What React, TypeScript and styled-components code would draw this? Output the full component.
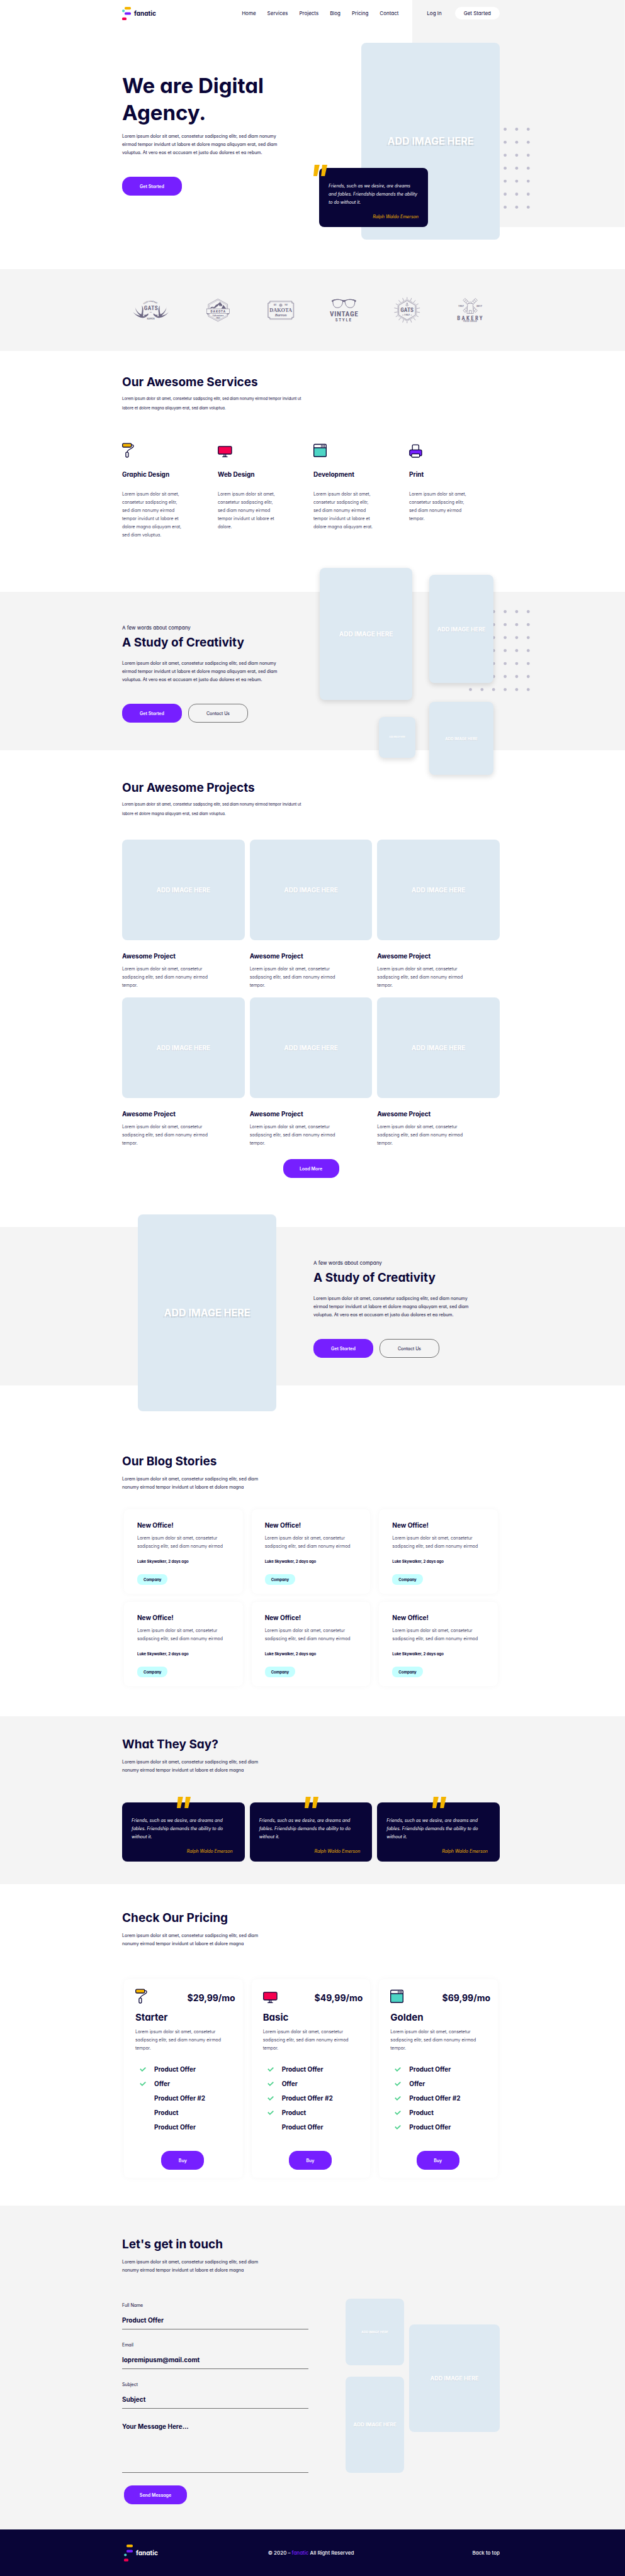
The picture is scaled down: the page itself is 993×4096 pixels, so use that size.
import React from "react";
import styled, { createGlobalStyle, css } from "styled-components";

const navy = "#090537";
const purple = "#761fff";
const amber = "#f4b400";
const teal = "#4dd5c5";
const red = "#f60050";
const grey = "#f4f4f4";
const logoInk = "#6d6883";

const GlobalStyle = createGlobalStyle`
  *, *::before, *::after { box-sizing: border-box; }
  body {
    margin: 0;
    background: #fff;
    color: ${navy};
    font-family: Inter, "Liberation Sans", sans-serif;
    font-feature-settings: "cv11";
    font-size: 7px;
    line-height: 13px;
  }
  h1, h2, h3, p, ul, figure, blockquote { margin: 0; padding: 0; }
  a { color: inherit; text-decoration: none; }
  button, input, textarea { font: inherit; font-feature-settings: inherit; color: inherit; }
`;

/* ---------- shared parts ---------- */

const Container = styled.div`
  width: 100%;
  max-width: 605px;
  margin: 0 auto;
  padding-right: 5px;
`;

const Section = styled.section<{ $top: number; $bottom: number; $grey?: boolean }>`
  padding: ${(p) => p.$top}px 0 ${(p) => p.$bottom}px;
  background: ${(p) => (p.$grey ? grey : "transparent")};
`;

const Title = styled.h2`
  font-size: 19px;
  line-height: 24px;
  font-weight: 700;
`;

const Lead = styled.p<{ $loose?: boolean }>`
  margin-top: ${(p) => (p.$loose ? 6 : 9)}px;
  font-size: ${(p) => (p.$loose ? 6 : 7)}px;
  line-height: ${(p) => (p.$loose ? 15 : 13)}px;
`;

const Copy = styled.p`
  font-size: 7px;
  line-height: 13px;
  font-weight: 300;
`;

const CardTitle = styled.h3`
  font-size: 10px;
  line-height: 12px;
  font-weight: 700;
`;

const Button = styled.button<{ $w: number; $outline?: boolean }>`
  height: 30px;
  min-width: ${(p) => p.$w}px;
  padding: 0 16px;
  border: 1px solid ${(p) => (p.$outline ? "#707070" : purple)};
  border-radius: 13px;
  background: ${(p) => (p.$outline ? "transparent" : purple)};
  color: ${(p) => (p.$outline ? navy : "#fff")};
  font-size: 7px;
  font-weight: ${(p) => (p.$outline ? 400 : 600)};
  white-space: nowrap;
`;

const ButtonRow = styled.div`
  display: flex;
  gap: 10px;
  margin-top: 32px;
`;

const ThreeColumns = styled.div<{ $top: number }>`
  display: grid;
  grid-template-columns: repeat(3, minmax(0, 1fr));
  gap: 13px 8px;
  margin-top: ${(p) => p.$top}px;
`;

const Placeholder = styled.div<{ $w?: number; $h: number; $text: number; $raised?: boolean }>`
  position: relative;
  display: flex;
  align-items: center;
  justify-content: center;
  width: ${(p) => (p.$w ? `${p.$w}px` : "100%")};
  height: ${(p) => p.$h}px;
  border-radius: 8px;
  background: #dde9f2;
  color: #fff;
  font-size: ${(p) => p.$text}px;
  font-weight: 700;
  white-space: nowrap;
  text-shadow: ${(p) =>
    p.$text > 12
      ? "-2px 2px 0 rgba(0,0,0,.07), 2px 2px 0 rgba(0,0,0,.07)"
      : "-1px 1px 0 rgba(0,0,0,.05), 1px 1px 0 rgba(0,0,0,.05)"};
  ${(p) => p.$raised && css`box-shadow: 0 3px 8px rgba(0, 0, 0, 0.14);`}
`;

const ImageBox = (props: { w?: number; h: number; text: number; raised?: boolean }) => (
  <Placeholder $w={props.w} $h={props.h} $text={props.text} $raised={props.raised}>
    ADD IMAGE HERE
  </Placeholder>
);

const DotsSvg = styled.svg<{ $x: number; $y: number }>`
  position: absolute;
  left: ${(p) => p.$x}px;
  top: ${(p) => p.$y}px;
  fill: #bfbdce;
`;

const Dots = ({ x, y }: { x: number; y: number }) => (
  <DotsSvg $x={x} $y={y} width="97" height="129" viewBox="0 0 97 129" aria-hidden="true">
    {Array.from({ length: 42 }, (_, i) => (
      <circle key={i} cx={2.5 + (i % 6) * 18.35} cy={2.5 + Math.floor(i / 6) * 20.65} r="2.4" />
    ))}
  </DotsSvg>
);

const LogoLink = styled.a`
  display: flex;
  align-items: center;
  gap: 5px;
  font-size: 10px;
  line-height: 12px;
  font-weight: 700;
`;

const Logo = ({ footer }: { footer?: boolean }) => (
  <LogoLink href="#top">
    <svg width="14" height={footer ? 27 : 21} viewBox={footer ? "0 0 14 27" : "0 0 14 21"} aria-hidden="true">
      <rect x="4" y="0" width="10" height="4.2" rx="1.6" fill={amber} />
      <rect x="4" y="8.4" width="10" height="4.2" rx="1.6" fill={purple} />
      {footer ? (
        <>
          <circle cx="2.2" cy="16.5" r="2.1" fill={teal} />
          <rect x="0" y="22.6" width="7" height="4.2" rx="1.6" fill={red} />
        </>
      ) : (
        <>
          <circle cx="2.1" cy="6.3" r="2.1" fill={teal} />
          <rect x="0" y="16.7" width="7" height="4.3" rx="1.6" fill={red} />
        </>
      )}
    </svg>
    <span>fanatic</span>
  </LogoLink>
);

/* ---------- service icons ---------- */

const IconSvg = styled.svg`
  display: block;
  overflow: visible;
  stroke: ${navy};
  stroke-width: 1.3;
  fill: none;
`;

const RollerIcon = () => (
  <IconSvg width="24" height="30" viewBox="0 0 24 30" aria-hidden="true">
    <rect x="0.7" y="7.2" width="14" height="5.8" rx="1.5" fill={amber} />
    <path d="M14.8 9.4h1.4c1.6 0 2.4 1.6 1.4 3.2-1.6 2.6-7.6 3.8-9 6.6-.4.8-.5 1.4-.5 2" />
    <rect x="5.9" y="20.8" width="4" height="8.3" rx="2" />
  </IconSvg>
);

const MonitorIcon = () => (
  <IconSvg width="24" height="30" viewBox="0 0 24 30" aria-hidden="true">
    <rect x="0.7" y="11.8" width="21.3" height="12.2" rx="1.5" fill={red} />
    <path d="M10 24.5v3.5M12.600 24.500v3.500M7.200 28.300h8.300" />
  </IconSvg>
);

const WindowIcon = () => (
  <IconSvg width="24" height="30" viewBox="0 0 24 30" aria-hidden="true">
    <rect x="0.7" y="8.500" width="19.600" height="19.400" rx="1.500" fill="#fff" />
    <path d="M0.700 14h19.600v12.400a1.500 1.500 0 0 1-1.500 1.500H2.200a1.500 1.500 0 0 1-1.500-1.500z" fill={teal} />
    <circle cx="13.400" cy="11.300" r="1.200" strokeWidth="0.900" />
    <circle cx="17.100" cy="11.300" r="1.200" strokeWidth="0.900" />
  </IconSvg>
);

const PrinterIcon = () => (
  <IconSvg width="24" height="30" viewBox="0 0 24 30" aria-hidden="true">
    <path d="M5.200 17.400V10.800a1.500 1.500 0 0 1 1.500-1.500h7.200a1.500 1.500 0 0 1 1.500 1.500v6.600" />
    <path d="M3.600 26.700h-.8a2 2 0 0 1-2-2v-5.300a2 2 0 0 1 2-2h15.200a2 2 0 0 1 2 2v5.300a2 2 0 0 1-2 2h-.8z" fill={purple} />
    <rect x="3.900" y="23.600" width="12.800" height="5.400" rx="1.500" fill="#fff" />
  </IconSvg>
);

/* ---------- header and hero ---------- */

const Top = styled.div`
  padding-bottom: 47px;
  background: linear-gradient(${grey}, ${grey}) right top / 34% 361px no-repeat;
`;

const Header = styled.header`
  display: flex;
  align-items: center;
  height: 42px;
`;

const Nav = styled.nav`
  display: flex;
  gap: 18px;
  margin-left: auto;
  font-size: 8px;
`;

const Account = styled.div`
  display: flex;
  align-items: center;
  gap: 21px;
  margin-left: 45px;
  font-size: 8px;
`;

const HeaderButton = styled.button`
  height: 20px;
  padding: 0 14px;
  border: 0;
  border-radius: 10px;
  background: #fff;
  font-size: 8px;
  white-space: nowrap;
`;

const Hero = styled.div`
  display: flex;
  justify-content: space-between;
  padding-top: 26px;
`;

const HeroText = styled.div`
  width: 270px;
  padding-top: 47px;
`;

const HeroTitle = styled.h1`
  font-size: 33px;
  line-height: 43px;
  font-weight: 700;
`;

const Paragraph = styled.p<{ $top: number }>`
  margin-top: ${(p) => p.$top}px;
  white-space: nowrap;
`;

const HeroImage = styled.div`
  position: relative;
`;

const QuoteCard = styled.blockquote`
  position: relative;
  height: 94px;
  padding: 22px 15px 10px;
  border-radius: 8px;
  background: ${navy};
  color: #fff;
  font-size: 7px;
  font-style: italic;
  white-space: nowrap;
`;

const FloatingQuote = styled.div`
  position: absolute;
  left: -67px;
  top: 199px;
  width: 173px;
`;

const Author = styled.footer<{ $inset: number }>`
  margin-top: 10px;
  padding-right: ${(p) => p.$inset}px;
  color: ${amber};
  text-align: right;
`;

const Mark = styled.svg<{ $corner?: boolean }>`
  position: absolute;
  top: ${(p) => (p.$corner ? -5 : -9)}px;
  left: ${(p) => (p.$corner ? "-9px" : "calc(50% - 10px)")};
  fill: ${amber};
`;

const Quote = ({ corner }: { corner?: boolean }) => (
  <QuoteCard>
    <Mark $corner={corner} width="22" height="18" viewBox="0 0 22 18" aria-hidden="true">
      <path d="M1.800 0H9.800L5.900 18H0zM14 0H22L18.100 18H12.200z" />
    </Mark>
    <p>
      {corner ? (
        <>Friends, such as we desire, are dreams<br />and fables. Friendship demands the ability<br />to do without it.</>
      ) : (
        <>Friends, such as we desire, are dreams and<br />fables. Friendship demands the ability to do<br />without it.</>
      )}
    </p>
    <Author $inset={corner ? 0 : 4}>Ralph Waldo Emerson</Author>
  </QuoteCard>
);

/* ---------- client logos ---------- */

const Clients = styled.div`
  display: grid;
  grid-template-columns: repeat(6, minmax(0, 1fr));
`;

const ClientSvg = styled.svg`
  display: block;
  width: 100%;
  height: 50px;
  fill: none;
  stroke: ${logoInk};
  stroke-width: 5;
  text {
    fill: ${logoInk};
    stroke: none;
    text-anchor: middle;
    font-family: "Roboto Condensed", Roboto, sans-serif;
    font-weight: 700;
  }
  .serif { font-family: "Liberation Serif", serif; }
  .script { font-family: "Liberation Serif", serif; font-style: italic; }
  .wide { font-family: Roboto, sans-serif; font-weight: 500; }
  .thin { stroke-width: 3; }
  .ink { fill: ${logoInk}; stroke: none; }
`;

const Antler = () => (
  <path className="ink" d="M57 211C80 238 108 258 140 262C165 264 180 252 196 236V221C182 234 168 238 152 234C156 239 160 243 166 243C160 248 152 249 146 247C148 243 149 239 149 235C147 226 148 216 150 205C152 184 148 164 137 149C142 172 140 205 132 230C104 218 84 194 75 163C80 194 96 222 122 243C98 240 76 228 57 211Z" />
);

const GatsAntlers = () => (
  <ClientSvg viewBox="-45 57 580 290" role="img" aria-label="Gats Barron">
    <defs><path id="gats-arc" d="M146 146Q218 84 292 146" /></defs>
    <text className="wide" fontSize="17"><textPath href="#gats-arc" startOffset="8%" textAnchor="start">FOOD COMPANY</textPath></text>
    <Antler />
    <g transform="matrix(-1 0 0 1 440 0)"><Antler /></g>
    <text x="222" y="190" fontSize="54" letterSpacing="3">GATS</text>
    <text x="218" y="211" fontSize="11">1957</text>
    <text className="wide" x="220" y="276" fontSize="18">BARRON</text>
  </ClientSvg>
);

const DakotaAdventure = () => (
  <ClientSvg viewBox="535 57 580 290" role="img" aria-label="Dakota Adventure">
    <path d="M838 88L927 137V248L838 295L749 248V137Z" className="thin" />
    <path d="M838 99L917 143V242L838 284L759 242V143Z" strokeWidth="2" />
    <path className="ink" d="M762 177L776 163L790 160L802 164L820 142L836 136L858 117L880 146L862 162L866 148L852 156L848 140L834 156L822 163L815 177L818 166L800 177L795 168ZM870 177L888 142L914 177Z" />
    <rect x="734" y="179" width="209" height="42" fill={grey} className="thin" />
    <path className="ink" d="M732 222H750V236ZM945 222H927V236Z" />
    <text x="841" y="211" fontSize="32" letterSpacing="6">DAKOTA</text>
    <text className="script" x="838" y="246" fontSize="25">Adventure</text>
    <text x="838" y="270" fontSize="19">1957</text>
  </ClientSvg>
);

const DakotaBarron = () => (
  <ClientSvg viewBox="1115 57 580 290" role="img" aria-label="Dakota Barron">
    <path className="thin" d="M1317 108H1519V127H1537V257H1519V276H1317V257H1298V127H1317Z" />
    <path strokeWidth="2" d="M1312 115H1524V122H1532V262H1524V268H1312V262H1304V122H1312Z" />
    <circle cx="1417" cy="146" r="11" className="thin" />
    <path strokeWidth="2" d="M1417 128V164M1399 146H1435M1405 134L1429 158M1429 134L1405 158" />
    <text x="1366" y="152" fontSize="15">EST.</text>
    <text x="1466" y="152" fontSize="15">1957</text>
    <text className="serif" x="1417" y="206" fontSize="48">DAKOTA</text>
    <text className="script" x="1417" y="248" fontSize="36">Barron</text>
  </ClientSvg>
);

const VintageStyle = () => (
  <ClientSvg viewBox="-133 57 580 290" role="img" aria-label="Vintage Style">
    <path d="M69 104C68 150 84 169 112 169C143 168 158 145 161 108C140 88 90 89 69 104Z" />
    <path d="M272 104C273 150 257 169 229 169C198 168 183 145 180 108C201 88 251 89 272 104Z" />
    <path className="ink" d="M57 104C76 90 105 88 130 92C155 101 186 101 211 92C236 88 265 90 285 104L280 114L270 118L268 106C240 94 205 92 184 106L180 119C174 112 167 112 161 119L157 106C136 92 101 94 73 106L71 118L61 114Z" />
    <text x="173" y="251" fontSize="66" letterSpacing="4">VINTAGE</text>
    <text x="170" y="293" fontSize="41" letterSpacing="10">STYLE</text>
  </ClientSvg>
);

const GatsBurst = () => (
  <ClientSvg viewBox="447 57 580 290" role="img" aria-label="Gats 1957">
    <path d="M753 104L829 147V236L753 280L677 236V147Z" className="thin" />
    <g className="thin">
      {Array.from({ length: 54 }, (_, i) => {
        const a = (i * Math.PI * 2) / 54 - Math.PI / 2;
        const off = (((i + 4.5) % 9) - 4.5) * (Math.PI / 27);
        const r0 = 78 / Math.cos(Math.PI / 6 - Math.abs(off)) + 1;
        const r1 = i % 3 === 0 ? 120 : r0 + 12;
        return (
          <line
            key={i}
            x1={753 + Math.cos(a) * r0}
            y1={192 + Math.sin(a) * r0}
            x2={753 + Math.cos(a) * r1}
            y2={192 + Math.sin(a) * r1}
          />
        );
      })}
      <circle cx="753" cy="128" r="4" />
      <path d="M753 132V152M746 136H760M740 142C742 150 748 152 753 153C758 152 764 150 766 142" />
    </g>
    <text x="753" y="210" fontSize="54" letterSpacing="1">GATS</text>
    <text x="753" y="245" fontSize="23" letterSpacing="2">1957</text>
    <path className="thin" d="M708 237H720M786 237H798" />
  </ClientSvg>
);

const Blade = () => (
  <path className="thin" d="M1309 139L1270 100L1287 83L1322 117M1296 126L1310 105M1283 113L1298 94" />
);

const Bakery = () => (
  <ClientSvg viewBox="1027 57 580 290" role="img" aria-label="Bakery Fresh Bread">
    <Blade />
    <g transform="matrix(-1 0 0 1 2670 0)"><Blade /></g>
    <g transform="matrix(1 0 0 -1 0 295)"><Blade /></g>
    <g transform="matrix(-1 0 0 -1 2670 295)"><Blade /></g>
    <path className="thin" fill={grey} d="M1311 130H1359L1365 222H1305ZM1320 130C1326 112 1344 112 1350 130M1325 222V194H1346V222" />
    <text x="1250" y="161" fontSize="24" letterSpacing="1">1957</text>
    <text x="1418" y="161" fontSize="24" letterSpacing="1">2017</text>
    <text x="1338" y="281" fontSize="50" letterSpacing="14">BAKERY</text>
    <text x="1335" y="303" fontSize="15" letterSpacing="4">FRESH BREAD</text>
  </ClientSvg>
);

/* ---------- services ---------- */

const ServiceGrid = styled.div`
  display: grid;
  grid-template-columns: repeat(4, 152px);
  margin-top: 42px;
  ${CardTitle} { margin-top: 20px; }
  ${Copy} { margin-top: 19px; }
`;

const services = [
  { name: "Graphic Design", icon: <RollerIcon />, lines: ["Lorem ipsum dolor sit amet,", "consetetur sadipscing elitr,", "sed diam nonumy eirmod", "tempor invidunt ut labore et", "dolore magna aliquyam erat,", "sed diam voluptua."] },
  { name: "Web Design", icon: <MonitorIcon />, lines: ["Lorem ipsum dolor sit amet,", "consetetur sadipscing elitr,", "sed diam nonumy eirmod", "tempor invidunt ut labore et", "dolore."] },
  { name: "Development", icon: <WindowIcon />, lines: ["Lorem ipsum dolor sit amet,", "consetetur sadipscing elitr,", "sed diam nonumy eirmod", "tempor invidunt ut labore et", "dolore magna aliquyam erat."] },
  { name: "Print", icon: <PrinterIcon />, lines: ["Lorem ipsum dolor sit amet,", "consetetur sadipscing elitr,", "sed diam nonumy eirmod", "tempor."] },
];

const Lines = ({ of }: { of: string[] }) => (
  <>
    {of.map((line, i) => (
      <React.Fragment key={i}>
        {i > 0 && <br />}
        {line}
      </React.Fragment>
    ))}
  </>
);

/* ---------- study of creativity ---------- */

const StudyRow = styled(Container)`
  display: flex;
  height: 252px;
`;

const StudyText = styled.div`
  flex: none;
  width: 314px;
  padding-top: 51px;
`;

const Kicker = styled.p`
  font-size: 8px;
  line-height: 12px;
  margin-bottom: 6px;
`;

const Collage = styled.div`
  position: relative;
  display: flex;
  gap: 22px;
  align-self: flex-start;
  margin-top: -38px;
`;

const CollageColumn = styled.div<{ $top: number; $gap: number }>`
  position: relative;
  display: flex;
  flex-direction: column;
  align-items: flex-end;
  gap: ${(p) => p.$gap}px;
  padding-top: ${(p) => p.$top}px;
`;

const Shift = styled.div`
  padding-right: 5px;
`;

const SideImage = styled.div`
  flex: none;
  width: 304px;
  padding-left: 25px;
  margin-top: -20px;
`;

const Study = () => (
  <StudyText>
    <Kicker>A few words about company</Kicker>
    <Title>A Study of Creativity</Title>
    <Paragraph $top={14}>
      Lorem ipsum dolor sit amet, consetetur sadipscing elitr, sed diam nonumy<br />
      eirmod tempor invidunt ut labore et dolore magna aliquyam erat, sed diam<br />
      voluptua. At vero eos et accusam et justo duo dolores et ea rebum.
    </Paragraph>
    <ButtonRow>
      <Button type="button" $w={95}>Get Started</Button>
      <Button type="button" $w={95} $outline>Contact Us</Button>
    </ButtonRow>
  </StudyText>
);

/* ---------- projects, blog, pricing ---------- */

const Project = styled.article`
  ${CardTitle} { margin: 19px 0 8px; }
`;

const Centered = styled.div<{ $top: number }>`
  display: flex;
  justify-content: center;
  margin-top: ${(p) => p.$top}px;
`;

const Card = styled.article`
  margin: 0 3px;
  border-radius: 8px;
  background: #fff;
  box-shadow: 0 0 10px rgba(0, 0, 0, 0.04);
`;

const Story = styled(Card)`
  height: 134px;
  padding: 19px 21px 14px;
  ${Copy} { margin-top: 8px; white-space: nowrap; }
`;

const Byline = styled.p`
  margin: 12px 0 14px;
  font-size: 6px;
  line-height: 12px;
  font-weight: 700;
`;

const Tag = styled.a`
  display: flex;
  align-items: center;
  width: fit-content;
  height: 17px;
  padding: 0 10px;
  border-radius: 7px 7px 9px 7px;
  background: #c4ffff;
  font-size: 6px;
  font-weight: 700;
`;

const Plan = styled(Card)`
  height: 316px;
  padding: 12px 12px 13px 18px;
`;

const PlanHead = styled.div`
  display: flex;
  align-items: center;
  justify-content: space-between;
  height: 30px;
`;

const PlanIcon = styled.div`
  margin-top: -6px;
`;

const Price = styled.p`
  padding-top: 5px;
  font-size: 14px;
  line-height: 18px;
  font-weight: 700;
`;

const PlanName = styled.h3`
  margin: 10px 0 7px;
  font-size: 15px;
  line-height: 18px;
  font-weight: 700;
`;

const Features = styled.ul`
  margin-top: 16px;
  list-style: none;
`;

const Feature = styled.li`
  display: grid;
  grid-template-columns: 30px 1fr;
  align-items: center;
  height: 23px;
  font-size: 10px;
  font-weight: 700;
  svg { margin-left: 7px; grid-column: 1; }
  span { grid-column: 2; }
`;

const BuyRow = styled(Centered)`
  padding-right: 8px;
`;

const Check = () => (
  <svg width="10" height="7" viewBox="0 0 10 7" fill="none" stroke="#4bd08b" strokeWidth="1.8" aria-label="included">
    <path d="M0.800 2.600L3.900 5.800L9.300 0.700" />
  </svg>
);

const features = ["Product Offer", "Offer", "Product Offer #2", "Product", "Product Offer"];
const plans = [
  { name: "Starter", price: "$29,99/mo", icon: <RollerIcon />, included: 2 },
  { name: "Basic", price: "$49,99/mo", icon: <MonitorIcon />, included: 4 },
  { name: "Golden", price: "$69,99/mo", icon: <WindowIcon />, included: 5 },
];

/* ---------- contact ---------- */

const ContactRow = styled.div`
  display: flex;
  justify-content: space-between;
  margin-top: 39px;
`;

const Form = styled.form`
  display: flex;
  flex-direction: column;
  gap: 20px;
  width: 296px;
  padding-top: 6px;
`;

const Field = styled.div`
  display: flex;
  flex-direction: column;
  gap: 12px;
`;

const Label = styled.label`
  font-size: 7px;
  line-height: 10px;
`;

const inputStyle = css`
  display: block;
  width: 100%;
  margin: 0;
  padding: 0 0 8px;
  border: 0;
  border-bottom: 1px solid #707070;
  border-radius: 0;
  outline: 0;
  background: transparent;
  font-size: 10px;
  line-height: 12px;
  font-weight: 700;
`;

const Input = styled.input`
  ${inputStyle}
  height: 21px;
`;

const TextArea = styled.textarea`
  ${inputStyle}
  height: 80px;
  margin-top: 2px;
  resize: none;
`;

const SendRow = styled.div`
  padding-left: 3px;
`;

const Gallery = styled.div`
  display: flex;
  align-items: flex-start;
  gap: 8px;
`;

const GalleryColumn = styled.div<{ $top?: number }>`
  display: grid;
  gap: 18px;
  padding-top: ${(p) => p.$top ?? 0}px;
`;

const Footer = styled.footer`
  background: ${navy};
  color: #fff;
  font-size: 8px;
  font-weight: 500;
`;

const FooterRow = styled(Container)`
  display: grid;
  grid-template-columns: 1fr auto 1fr;
  align-items: center;
  height: 74px;
  > :first-child { padding-left: 3px; }
  > :last-child { justify-self: end; }
`;

const Brand = styled.a`
  color: ${purple};
`;

const App = () => (
  <>
    <GlobalStyle />
    <Top id="top">
      <Container>
        <Header>
          <Logo />
          <Nav>
            {["Home", "Services", "Projects", "Blog", "Pricing", "Contact"].map((item) => (
              <a key={item} href={`#${item.toLowerCase()}`}>{item}</a>
            ))}
          </Nav>
          <Account>
            <a href="#login">Log In</a>
            <HeaderButton type="button">Get Started</HeaderButton>
          </Account>
        </Header>
        <Hero>
          <HeroText>
            <HeroTitle>We are Digital<br />Agency.</HeroTitle>
            <Paragraph $top={9}>
              Lorem ipsum dolor sit amet, consetetur sadipscing elitr, sed diam nonumy<br />
              eirmod tempor invidunt ut labore et dolore magna aliquyam erat, sed diam<br />
              voluptua. At vero eos et accusam et justo duo dolores et ea rebum.
            </Paragraph>
            <ButtonRow>
              <Button type="button" $w={95}>Get Started</Button>
            </ButtonRow>
          </HeroText>
          <HeroImage>
            <Dots x={171} y={135} />
            <ImageBox w={220} h={313} text={16} />
            <FloatingQuote><Quote corner /></FloatingQuote>
          </HeroImage>
        </Hero>
      </Container>
    </Top>

    <Section $top={42} $bottom={38} $grey>
      <Container>
        <Clients>
          <GatsAntlers />
          <DakotaAdventure />
          <DakotaBarron />
          <VintageStyle />
          <GatsBurst />
          <Bakery />
        </Clients>
      </Container>
    </Section>

    <Section id="services" $top={38} $bottom={84}>
      <Container>
        <Title>Our Awesome Services</Title>
        <Lead $loose>
          Lorem ipsum dolor sit amet, consetetur sadipscing elitr, sed diam nonumy eirmod tempor invidunt ut<br />
          labore et dolore magna aliquyam erat, sed diam voluptua.
        </Lead>
        <ServiceGrid>
          {services.map((s) => (
            <article key={s.name}>
              {s.icon}
              <CardTitle>{s.name}</CardTitle>
              <Copy><Lines of={s.lines} /></Copy>
            </article>
          ))}
        </ServiceGrid>
      </Container>
    </Section>

    <Section $top={0} $bottom={0} $grey>
      <StudyRow>
        <Study />
        <Collage>
          <Dots x={237} y={67} />
          <CollageColumn $top={0} $gap={27}>
            <Shift><ImageBox w={147} h={210} text={10} raised /></Shift>
            <ImageBox w={58} h={65} text={3} raised />
          </CollageColumn>
          <CollageColumn $top={11} $gap={30}>
            <ImageBox w={102} h={172} text={9} raised />
            <ImageBox w={102} h={116} text={6} raised />
          </CollageColumn>
        </Collage>
      </StudyRow>
    </Section>

    <Section id="projects" $top={48} $bottom={78}>
      <Container>
        <Title>Our Awesome Projects</Title>
        <Lead $loose>
          Lorem ipsum dolor sit amet, consetetur sadipscing elitr, sed diam nonumy eirmod tempor invidunt ut<br />
          labore et dolore magna aliquyam erat, sed diam voluptua.
        </Lead>
        <ThreeColumns $top={34}>
          {Array.from({ length: 6 }, (_, i) => (
            <Project key={i}>
              <ImageBox h={160} text={10} />
              <CardTitle>Awesome Project</CardTitle>
              <Copy>Lorem ipsum dolor sit amet, consetetur<br />sadipscing elitr, sed diam nonumy eirmod<br />tempor.</Copy>
            </Project>
          ))}
        </ThreeColumns>
        <Centered $top={19}>
          <Button type="button" $w={89}>Load More</Button>
        </Centered>
      </Container>
    </Section>

    <Section $top={0} $bottom={0} $grey>
      <StudyRow>
        <SideImage><ImageBox w={220} h={313} text={16} /></SideImage>
        <Study />
      </StudyRow>
    </Section>

    <Section id="blog" $top={109} $bottom={48}>
      <Container>
        <Title>Our Blog Stories</Title>
        <Lead>Lorem ipsum dolor sit amet, consetetur sadipscing elitr, sed diam<br />nonumy eirmod tempor invidunt ut labore et dolore magna</Lead>
        <ThreeColumns $top={29}>
          {Array.from({ length: 6 }, (_, i) => (
            <Story key={i}>
              <CardTitle>New Office!</CardTitle>
              <Copy>Lorem ipsum dolor sit amet, consetetur<br />sadipscing elitr, sed diam nonumy eirmod</Copy>
              <Byline>Luke Skywalker, 2 days ago</Byline>
              <Tag href="#company">Company</Tag>
            </Story>
          ))}
        </ThreeColumns>
      </Container>
    </Section>

    <Section $top={33} $bottom={36} $grey>
      <Container>
        <Title>What They Say?</Title>
        <Lead>Lorem ipsum dolor sit amet, consetetur sadipscing elitr, sed diam<br />nonumy eirmod tempor invidunt ut labore et dolore magna</Lead>
        <ThreeColumns $top={45}>
          <Quote />
          <Quote />
          <Quote />
        </ThreeColumns>
      </Container>
    </Section>

    <Section id="pricing" $top={42} $bottom={44}>
      <Container>
        <Title>Check Our Pricing</Title>
        <Lead>Lorem ipsum dolor sit amet, consetetur sadipscing elitr, sed diam<br />nonumy eirmod tempor invidunt ut labore et dolore magna</Lead>
        <ThreeColumns $top={50}>
          {plans.map((plan) => (
            <Plan key={plan.name}>
              <PlanHead>
                <PlanIcon>{plan.icon}</PlanIcon>
                <Price>{plan.price}</Price>
              </PlanHead>
              <PlanName>{plan.name}</PlanName>
              <Copy>Lorem ipsum dolor sit amet, consetetur<br />sadipscing elitr, sed diam nonumy eirmod<br />tempor.</Copy>
              <Features>
                {features.map((feature, i) => (
                  <Feature key={i}>
                    {i < plan.included && <Check />}
                    <span>{feature}</span>
                  </Feature>
                ))}
              </Features>
              <BuyRow $top={26}>
                <Button type="button" $w={68}>Buy</Button>
              </BuyRow>
            </Plan>
          ))}
        </ThreeColumns>
      </Container>
    </Section>

    <Section id="contact" $top={50} $bottom={40} $grey>
      <Container>
        <Title>Let's get in touch</Title>
        <Lead>Lorem ipsum dolor sit amet, consetetur sadipscing elitr, sed diam<br />nonumy eirmod tempor invidunt ut labore et dolore magna</Lead>
        <ContactRow>
          <Form onSubmit={(e) => e.preventDefault()}>
            <Field>
              <Label htmlFor="name">Full Name</Label>
              <Input id="name" type="text" defaultValue="Product Offer" />
            </Field>
            <Field>
              <Label htmlFor="email">Email</Label>
              <Input id="email" type="text" defaultValue="lopremipusm@mail.comt" />
            </Field>
            <Field>
              <Label htmlFor="subject">Subject</Label>
              <Input id="subject" type="text" defaultValue="Subject" />
            </Field>
            <TextArea aria-label="Your message" defaultValue="Your Message Here..." />
            <SendRow>
              <Button type="submit" $w={100}>Send Message</Button>
            </SendRow>
          </Form>
          <Gallery>
            <GalleryColumn>
              <ImageBox w={93} h={106} text={5} />
              <ImageBox w={93} h={153} text={8} />
            </GalleryColumn>
            <GalleryColumn $top={41}>
              <ImageBox w={144} h={171} text={9} />
            </GalleryColumn>
          </Gallery>
        </ContactRow>
      </Container>
    </Section>

    <Footer>
      <FooterRow>
        <Logo footer />
        <p>© 2020 – <Brand href="#top">fanatic</Brand> All Right Reserved</p>
        <a href="#top">Back to top</a>
      </FooterRow>
    </Footer>
  </>
);

export default App;
